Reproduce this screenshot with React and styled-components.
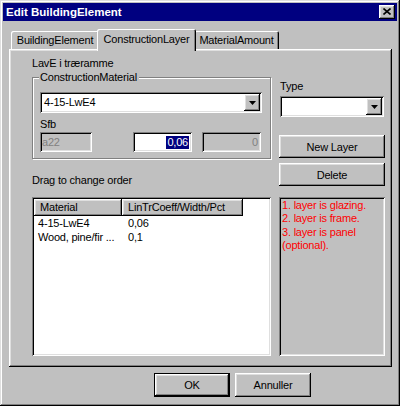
import React from 'react';
import styled, { createGlobalStyle } from 'styled-components';

const GlobalStyle = createGlobalStyle`
  html, body {
    margin: 0;
    padding: 0;
    background: #c0c0c0;
  }
  body {
    font-family: "Liberation Sans", Arial, sans-serif;
    font-size: 11px;
    letter-spacing: -0.2px;
    color: #000;
  }
  * {
    box-sizing: border-box;
  }
`;

// classic 3d edges
const raised = `
  box-shadow: inset -1px -1px #000, inset 1px 1px #fff,
    inset -2px -2px #808080, inset 2px 2px #dfdfdf;
`;
const sunken = `
  box-shadow: inset 1px 1px #808080, inset -1px -1px #fff,
    inset 2px 2px #000, inset -2px -2px #dfdfdf;
`;

const rows = [
  { material: '4-15-LwE4', value: '0,06' },
  { material: 'Wood, pine/fir ...', value: '0,1' },
];

const notes = ['1. layer is glazing.', '2. layer is frame.', '3. layer is panel', '(optional).'];

function DownArrow() {
  return (
    <svg width="7" height="4" viewBox="0 0 7 4">
      <path d="M0 0h7L3.5 4z" fill="#000" />
    </svg>
  );
}

function Combo({ width, value }) {
  return (
    <ComboBox $width={width}>
      <ComboText>{value}</ComboText>
      <DropButton>
        <DownArrow />
      </DropButton>
    </ComboBox>
  );
}

function App() {
  return (
    <>
      <GlobalStyle />
      <Window>
        <TitleBar>
          <Title>Edit BuildingElement</Title>
          <CloseButton>
            <svg width="8" height="7" viewBox="0 0 8 7">
              <path d="M0.5 0.5L7.5 6.5M7.5 0.5L0.5 6.5" stroke="#000" strokeWidth="1.6" />
            </svg>
          </CloseButton>
        </TitleBar>

        <Client>
          <TabStrip>
            <Tab $width={88}>BuildingElement</Tab>
            <Tab $width={95} $active>ConstructionLayer</Tab>
            <Tab $width={85}>MaterialAmount</Tab>
          </TabStrip>

          <Panel>
            <LeftColumn>
              <Label>LavE i træramme</Label>
              <GroupBox>
                <Legend>ConstructionMaterial</Legend>
                <Combo width={222} value="4-15-LwE4" />
                <Label $top={5}>Sfb</Label>
                <EditRow>
                  <Edit $width={52} $disabled>a22</Edit>
                  <Edit $width={59} $align="right" $left={41}>
                    <Selected>0,06</Selected>
                  </Edit>
                  <Edit $width={59} $align="right" $left={10} $disabled>0</Edit>
                </EditRow>
              </GroupBox>
              <Label $top={15}>Drag to change order</Label>
              <ListView>
                <HeaderRow>
                  <HeaderCell $width={88}>Material</HeaderCell>
                  <HeaderCell $width={121}>LinTrCoeff/Width/Pct</HeaderCell>
                </HeaderRow>
                {rows.map((r) => (
                  <ListRow key={r.material}>
                    <ListCell $width={88} $pad={4}>{r.material}</ListCell>
                    <ListCell $width={121} $pad={6}>{r.value}</ListCell>
                  </ListRow>
                ))}
              </ListView>
            </LeftColumn>

            <RightColumn>
              <Label $top={23} $left={1}>Type</Label>
              <TypeWrap>
                <Combo width={104} value="" />
              </TypeWrap>
              <PushButton $top={18}>New Layer</PushButton>
              <PushButton $top={5}>Delete</PushButton>
              <Notes>
                {notes.map((n) => (
                  <div key={n}>{n}</div>
                ))}
              </Notes>
            </RightColumn>
          </Panel>

          <Footer>
            <PushButton $width={76} $height={24} $default>OK</PushButton>
            <PushButton $width={76} $height={24}>Annuller</PushButton>
          </Footer>
        </Client>
      </Window>
    </>
  );
}

const Window = styled.div`
  width: 400px;
  height: 406px;
  padding: 3px;
  background: #c0c0c0;
  display: flex;
  flex-direction: column;
  box-shadow: inset -1px -1px #000, inset 1px 1px #dfdfdf,
    inset -2px -2px #808080, inset 2px 2px #fff;
`;

const TitleBar = styled.div`
  height: 18px;
  background: #000080;
  display: flex;
  align-items: center;
  justify-content: space-between;
  padding: 0 2px 0 3px;
`;

const Title = styled.span`
  color: #fff;
  font-weight: bold;
  font-size: 11.5px;
  letter-spacing: 0;
`;

const CloseButton = styled.div`
  width: 16px;
  height: 14px;
  background: #c0c0c0;
  display: flex;
  align-items: center;
  justify-content: center;
  padding-bottom: 1px;
  ${raised}
`;

const Client = styled.div`
  flex: 1;
  display: flex;
  flex-direction: column;
  padding: 0 5px 0 6px;
`;

const TabStrip = styled.div`
  margin-top: 8px;
  height: 20px;
  display: flex;
  align-items: flex-end;
  padding-left: 2px;
  position: relative;
  z-index: 1;
`;

const Tab = styled.div`
  width: ${(p) => p.$width + (p.$active ? 4 : 0)}px;
  height: ${(p) => (p.$active ? 22 : 18)}px;
  margin: 0 ${(p) => (p.$active ? -2 : 0)}px ${(p) => (p.$active ? -2 : 0)}px;
  position: relative;
  z-index: ${(p) => (p.$active ? 2 : 1)};
  background: #c0c0c0;
  display: flex;
  justify-content: center;
  padding-top: ${(p) => (p.$active ? 4 : 3)}px;
  border-radius: 2px 2px 0 0;
  box-shadow: inset 1px 1px #fff, inset -1px 0 #000, inset -2px 0 #808080;
`;

const Panel = styled.div`
  height: 318px;
  display: flex;
  gap: 8px;
  padding: 8px 0 0 23px;
  box-shadow: inset -1px -1px #000, inset 1px 1px #fff,
    inset -2px -2px #808080, inset 2px 2px #dfdfdf;
`;

const LeftColumn = styled.div`
  width: 239px;
  display: flex;
  flex-direction: column;
`;

const RightColumn = styled.div`
  width: 106px;
  display: flex;
  flex-direction: column;
`;

const Label = styled.div`
  height: 13px;
  line-height: 13px;
  margin-top: ${(p) => p.$top || 0}px;
  margin-left: ${(p) => p.$left || 0}px;
  white-space: nowrap;
`;

const GroupBox = styled.div`
  position: relative;
  margin-top: 7px;
  height: 82px;
  padding: 14px 0 0 7px;
  border: 1px solid #808080;
  box-shadow: inset 1px 1px #fff, 1px 1px #fff;
  display: flex;
  flex-direction: column;
`;

const Legend = styled.span`
  position: absolute;
  top: -7px;
  left: 6px;
  padding: 0 2px 0 1px;
  height: 13px;
  line-height: 13px;
  background: #c0c0c0;
`;

const ComboBox = styled.div`
  width: ${(p) => p.$width}px;
  height: 21px;
  background: #fff;
  padding: 2px;
  display: flex;
  ${sunken}
`;

const ComboText = styled.div`
  flex: 1;
  padding-left: 2px;
  line-height: 17px;
`;

const DropButton = styled.div`
  width: 16px;
  height: 17px;
  background: #c0c0c0;
  display: flex;
  align-items: center;
  justify-content: center;
  ${raised}
`;

const TypeWrap = styled.div`
  margin: 3px 0 0 1px;
`;

const EditRow = styled.div`
  display: flex;
  margin-top: 1px;
`;

const Edit = styled.div`
  width: ${(p) => p.$width}px;
  height: 20px;
  margin-left: ${(p) => p.$left || 0}px;
  padding: 0 3px 0 2px;
  display: flex;
  align-items: center;
  justify-content: ${(p) => (p.$align === 'right' ? 'flex-end' : 'flex-start')};
  background: ${(p) => (p.$disabled ? '#c0c0c0' : '#fff')};
  color: ${(p) => (p.$disabled ? '#808080' : '#000')};
  ${sunken}
`;

const Selected = styled.span`
  background: #000080;
  color: #fff;
  line-height: 13px;
  padding: 0 1px;
`;

const ListView = styled.div`
  margin-top: 10px;
  height: 159px;
  background: #fff;
  padding: 2px;
  ${sunken}
`;

const HeaderRow = styled.div`
  display: flex;
  height: 17px;
`;

const HeaderCell = styled.div`
  width: ${(p) => p.$width}px;
  background: #c0c0c0;
  padding: 2px 0 0 6px;
  white-space: nowrap;
  overflow: hidden;
  ${raised}
`;

const ListRow = styled.div`
  display: flex;
  height: 14px;
  line-height: 14px;
`;

const ListCell = styled.div`
  width: ${(p) => p.$width}px;
  padding-left: ${(p) => p.$pad}px;
  white-space: nowrap;
  overflow: hidden;
`;

const PushButton = styled.div`
  width: ${(p) => p.$width || 106}px;
  height: ${(p) => p.$height || 23}px;
  margin-top: ${(p) => p.$top || 0}px;
  background: #c0c0c0;
  display: flex;
  align-items: center;
  justify-content: center;
  ${(p) =>
    p.$default
      ? `box-shadow: inset 0 0 0 1px #000, inset -2px -2px #000, inset 2px 2px #fff,
          inset -3px -3px #808080, inset 3px 3px #dfdfdf;`
      : raised}
`;

const Notes = styled.div`
  margin-top: 11px;
  height: 159px;
  padding: 2px 3px;
  color: #ff0000;
  line-height: 13.4px;
  ${sunken}
`;

const Footer = styled.div`
  display: flex;
  gap: 5px;
  margin-top: 6px;
  padding-left: 145px;
`;

export default App;
